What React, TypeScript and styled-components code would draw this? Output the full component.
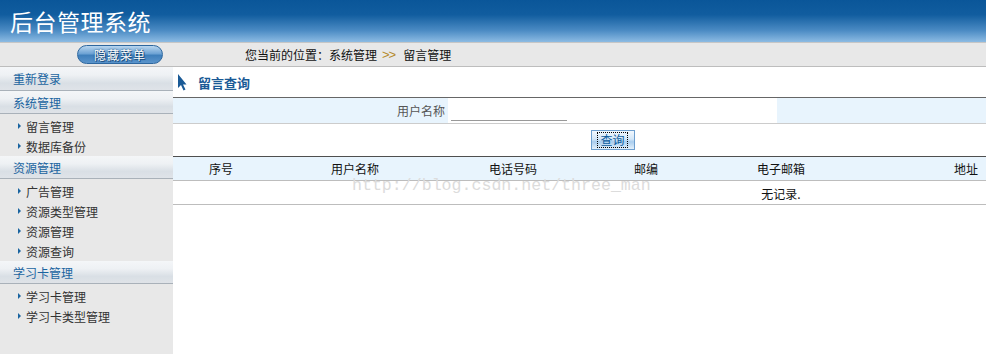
import styled, { createGlobalStyle } from "styled-components"

const GlobalStyle = createGlobalStyle`
  html, body {
    margin: 0;
    padding: 0;
    background: #ffffff;
    font-family: "Noto Sans CJK SC", "Liberation Sans", sans-serif;
    font-size: 12px;
  }
`

const Page = styled.div`
  display: flex;
  flex-direction: column;
  min-height: 100vh;
`

const Header = styled.div`
  height: 42px;
  display: flex;
  align-items: center;
  padding-left: 10px;
  background: linear-gradient(#0a5699 0%, #115d9f 35%, #4a8ac3 72%, #8cbbe3 100%);
  h1 {
    margin: 0;
    color: #ffffff;
    font-size: 23px;
    font-weight: normal;
    letter-spacing: 0.5px;
    line-height: 1;
  }
`

const Toolbar = styled.div`
  height: 23px;
  display: flex;
  align-items: center;
  background: #e8e8e8;
  border-top: 1px solid #c6c6c6;
  border-bottom: 1px solid #bdbdbd;
`

const ToggleCell = styled.div`
  width: 245px;
  display: flex;
  padding-left: 77px;
  box-sizing: border-box;
`

const ToggleButton = styled.button`
  width: 86px;
  height: 19px;
  padding: 0;
  border: 1px solid #2d679f;
  border-radius: 10px;
  background: linear-gradient(#b9d6ef 0%, #6ea3d4 45%, #3f7fbb 55%, #5a94cb 100%);
  color: #ffffff;
  font-family: inherit;
  font-size: 12px;
  line-height: 17px;
  text-shadow: 0 0 2px #0d3e6e, 1px 1px 0 #1b4f82;
  letter-spacing: 1px;
`

const Crumbs = styled.div`
  display: flex;
  align-items: center;
  gap: 5px;
  color: #111111;
  .sep {
    color: #b58a2a;
    font-family: "Liberation Sans", sans-serif;
    font-size: 13px;
    letter-spacing: -1px;
    padding-right: 3px;
  }
`

const Body = styled.div`
  flex: 1;
  display: flex;
`

const Sidebar = styled.div`
  width: 173px;
  flex-shrink: 0;
  background: #e8e8e8;
  display: flex;
  flex-direction: column;
`

const MenuHead = styled.div<{ $tall?: boolean }>`
  height: ${p => (p.$tall ? "23px" : "22px")};
  display: flex;
  align-items: center;
  padding-left: 13px;
  color: #1a64a0;
  background: linear-gradient(#f4f6f8 0%, #eef1f4 35%, #d9dfe5 70%, #dfe3e8 100%);
  border-bottom: 1px solid #a9b1b9;
`

const MenuGroup = styled.div`
  display: flex;
  flex-direction: column;
  padding: 2px 0 0;
`

const MenuItem = styled.div`
  height: 20px;
  display: flex;
  align-items: center;
  gap: 5px;
  padding-left: 18px;
  color: #333333;
  &::before {
    content: "";
    width: 0;
    height: 0;
    border-top: 3px solid transparent;
    border-bottom: 3px solid transparent;
    border-left: 3px solid #1a64a0;
  }
`

const Main = styled.div`
  flex: 1;
  position: relative;
  background: #ffffff;
`

const TitleRow = styled.div`
  height: 30px;
  display: flex;
  align-items: center;
  gap: 11px;
  padding-left: 4px;
  border-bottom: 1px solid #666666;
  h2 {
    margin: 0;
    font-size: 13px;
    font-weight: bold;
    color: #1a5a96;
  }
`

const SearchGrid = styled.div`
  display: grid;
  grid-template-columns: 275px 329px 1fr;
`

const LabelCell = styled.div`
  height: 25px;
  display: flex;
  align-items: center;
  justify-content: flex-end;
  padding-right: 3px;
  background: #e8f4fd;
  color: #555555;
  border-bottom: 1px solid #cccccc;
`

const InputCell = styled.div`
  height: 25px;
  display: flex;
  align-items: flex-end;
  padding-left: 3px;
  border-bottom: 1px solid #cccccc;
  background: #ffffff;
`

const FillCell = styled.div`
  height: 25px;
  background: #e8f4fd;
  border-bottom: 1px solid #cccccc;
`

const TextInput = styled.input`
  width: 116px;
  height: 20px;
  margin-bottom: 2px;
  padding: 0;
  border: none;
  border-bottom: 1px solid #999999;
  background: transparent;
  outline: none;
`

const ButtonCell = styled.div`
  grid-column: 2;
  height: 32px;
  display: flex;
  align-items: center;
  justify-content: center;
`

const QueryButton = styled.button`
  width: 44px;
  height: 20px;
  padding: 0;
  border: 1px solid #6e9fcf;
  background: linear-gradient(#f2f8fe 0%, #d4e7f8 45%, #a9cdee 60%, #e3f0fb 100%);
  color: #0d5c9d;
  font-family: inherit;
  font-size: 12px;
  display: flex;
  align-items: center;
  justify-content: center;
  span {
    border: 1px dotted #000000;
    padding: 0 2px;
    line-height: 14px;
  }
`

const Table = styled.div`
  border-top: 1px solid #4f4f4f;
`

const Row = styled.div<{ $head?: boolean }>`
  display: grid;
  grid-template-columns: 96px 172px 144px 122px 148px 1fr;
  height: 23px;
  align-items: center;
  background: ${p => (p.$head ? "#e8f4fd" : "#ffffff")};
  border-bottom: 1px solid #bdbdbd;
  color: #111111;
  & > div {
    text-align: center;
  }
  & > div:last-child {
    text-align: right;
    padding-right: 8px;
  }
`

const EmptyCell = styled.div`
  grid-column: 5;
  padding-top: 2px;
  text-align: center !important;
  padding-right: 0 !important;
`

const Watermark = styled.div`
  position: absolute;
  left: 179px;
  top: 110px;
  font-family: "Liberation Mono", monospace;
  font-size: 16.6px;
  line-height: 18px;
  color: #dcdcdc;
  pointer-events: none;
  white-space: nowrap;
`

function PointerIcon() {
  return (
    <svg width="10" height="17" viewBox="0 0 10 17">
      <path d="M1 0 L1 14 L4 11 L6.5 16.5 L8.5 15.5 L6 10.5 L9.5 10.5 Z" fill="#1a5a96" />
    </svg>
  )
}

const menu = [
  { title: "系统管理", items: ["留言管理", "数据库备份"] },
  { title: "资源管理", items: ["广告管理", "资源类型管理", "资源管理", "资源查询"] },
  { title: "学习卡管理", items: ["学习卡管理", "学习卡类型管理"] },
]

const columns = ["序号", "用户名称", "电话号码", "邮编", "电子邮箱", "地址"]

export default function App() {
  return (
    <Page>
      <GlobalStyle />
      <Header>
        <h1>后台管理系统</h1>
      </Header>
      <Toolbar>
        <ToggleCell>
          <ToggleButton>隐藏菜单</ToggleButton>
        </ToggleCell>
        <Crumbs>
          <span>您当前的位置：系统管理</span>
          <span className="sep">&gt;&gt;</span>
          <span>留言管理</span>
        </Crumbs>
      </Toolbar>
      <Body>
        <Sidebar>
          <MenuHead $tall>重新登录</MenuHead>
          {menu.map(group => (
            <div key={group.title}>
              <MenuHead>{group.title}</MenuHead>
              <MenuGroup>
                {group.items.map(item => (
                  <MenuItem key={item}>{item}</MenuItem>
                ))}
              </MenuGroup>
            </div>
          ))}
        </Sidebar>
        <Main>
          <TitleRow>
            <PointerIcon />
            <h2>留言查询</h2>
          </TitleRow>
          <SearchGrid>
            <LabelCell>用户名称</LabelCell>
            <InputCell>
              <TextInput type="text" />
            </InputCell>
            <FillCell />
            <ButtonCell>
              <QueryButton>
                <span>查询</span>
              </QueryButton>
            </ButtonCell>
          </SearchGrid>
          <Table>
            <Row $head>
              {columns.map(c => (
                <div key={c}>{c}</div>
              ))}
            </Row>
            <Row>
              <EmptyCell>无记录.</EmptyCell>
            </Row>
          </Table>
          <Watermark>http://blog.csdn.net/three_man</Watermark>
        </Main>
      </Body>
    </Page>
  )
}
